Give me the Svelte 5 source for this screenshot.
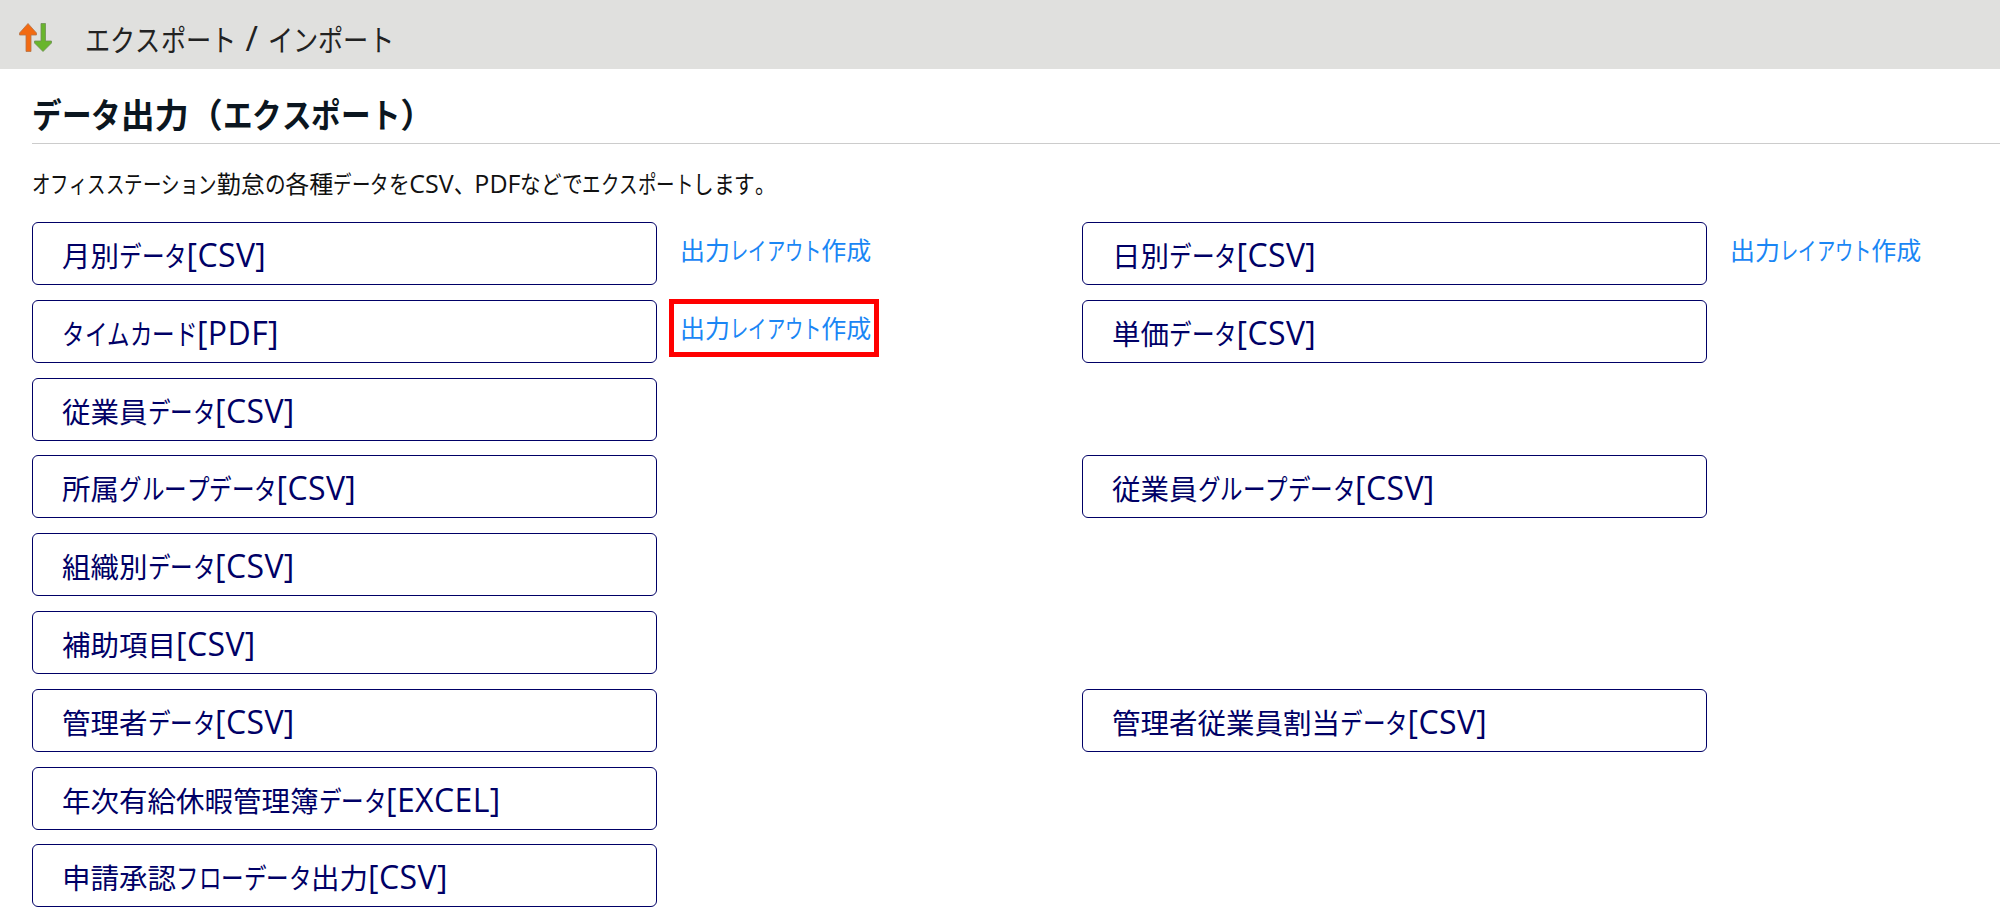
<script>
  const rows = [
    [{ label: "月別データ[CSV]", link: true }, { label: "日別データ[CSV]", link: true }],
    [{ label: "タイムカード[PDF]", link: true, marked: true }, { label: "単価データ[CSV]" }],
    [{ label: "従業員データ[CSV]" }, null],
    [{ label: "所属グループデータ[CSV]" }, { label: "従業員グループデータ[CSV]" }],
    [{ label: "組織別データ[CSV]" }, null],
    [{ label: "補助項目[CSV]" }, null],
    [{ label: "管理者データ[CSV]" }, { label: "管理者従業員割当データ[CSV]" }],
    [{ label: "年次有給休暇管理簿データ[EXCEL]" }, null],
    [{ label: "申請承認フローデータ出力[CSV]" }, null]
  ];

  // the original UI font has narrow kana and wide latin, so each kind gets its own treatment
  function runs(text) {
    return text.match(/[\u3000-\u30ff]|[\u4e00-\u9fff\uff00-\uffef]+|[^\u3000-\u30ff\u4e00-\u9fff\uff00-\uffef]+/g).map((part) => {
      let kind = "latin";
      if (/[\u30a0-\u30ff]/.test(part)) kind = "kana";
      else if (/[\u3000-\u309f]/.test(part)) kind = "kana hira";
      else if (/[\u4e00-\u9fff\uff00-\uffef]/.test(part)) kind = "kanji";
      return { part, kind };
    });
  }
</script>

{#snippet spaced(text)}
  {#each runs(text) as run}<span class={run.kind}>{run.part}</span>{/each}
{/snippet}

<div class="page">
  <header class="topbar">
    <svg class="topbar-icon" viewBox="0 0 33 29" width="33" height="29" aria-hidden="true">
      <path d="M9 0.5 L17.5 10 V12 H12 V28.5 H7 V12 H0.5 V10 Z" fill="#f26a12" stroke="#b5754a" stroke-width="0.8" />
      <path d="M22 0.5 H26.5 V18 H32.5 V20 L24 28.5 L15.5 20 V18 H22 Z" fill="#69b52c" stroke="#6f8f55" stroke-width="0.8" />
    </svg>
    <span class="topbar-title">{@render spaced("エクスポート / インポート")}</span>
  </header>

  <main class="content">
    <h1 class="heading">{@render spaced("データ出力（エクスポート）")}</h1>
    <p class="lead">{@render spaced("オフィスステーション勤怠の各種データをCSV、PDFなどでエクスポートします。")}</p>

    <div class="rows">
      {#each rows as row}
        <div class="row">
          {#each row as cell}
            <div class="cell">
              {#if cell}
                <button class="export-btn" type="button">{@render spaced(cell.label)}</button>
                {#if cell.link}
                  <a class="layout-link" class:marked={cell.marked} href="#layout">{@render spaced("出力レイアウト作成")}</a>
                {/if}
              {/if}
            </div>
          {/each}
        </div>
      {/each}
    </div>
  </main>
</div>

<style>
  :global(body) {
    margin: 0;
    background: #fff;
  }
  .page {
    font-family: "Noto Sans CJK JP", "Noto Sans", sans-serif;
    color: #111;
    height: 919px;
    overflow: hidden;
  }
  .kana {
    display: inline-block;
    width: calc(1em * var(--squeeze));
    transform: scaleX(var(--squeeze));
    transform-origin: left center;
    white-space: nowrap;
  }
  .kana.hira {
    width: calc(1em * var(--squeeze-hira, var(--squeeze)));
    transform: scaleX(var(--squeeze-hira, var(--squeeze)));
  }
  .latin {
    font-family: "Open Sans", "Noto Sans CJK JP", sans-serif;
    font-size: var(--latin-size, 1em);
    letter-spacing: var(--latin, 0);
  }
  .topbar {
    height: 69px;
    background: #e0e0de;
    display: flex;
    align-items: center;
    box-sizing: border-box;
    padding: 6px 0 0 19px;
    white-space: pre;
  }
  .topbar-title {
    margin-left: 33px;
    font-size: 30px;
    color: #222;
    --squeeze: 0.84;
    --latin-size: 34px;
    --latin: 0.5px;
  }
  .content {
    padding-left: 32px;
  }
  .heading {
    margin: 0;
    padding: 22px 0 6px;
    height: 46px;
    line-height: 46px;
    font-size: 34px;
    font-weight: 700;
    color: #0b1620;
    border-bottom: 1px solid #ccc;
    --squeeze: 0.87;
  }
  .lead {
    margin: 24px 0 0;
    height: 30px;
    line-height: 30px;
    font-size: 24px;
    color: #111;
    --squeeze: 0.77;
    --squeeze-hira: 0.86;
    --latin-size: 25px;
  }
  .rows {
    margin-top: 24px;
    display: flex;
    flex-direction: column;
    gap: 14.8px;
  }
  .row {
    display: grid;
    grid-template-columns: 1050px 1fr;
    height: 63px;
  }
  .cell {
    display: flex;
    align-items: flex-start;
  }
  .export-btn {
    width: 625px;
    height: 63px;
    box-sizing: border-box;
    padding: 2px 0 0 29px;
    text-align: left;
    background: #fff;
    border: 1px solid #000066;
    border-radius: 6px;
    font: inherit;
    font-size: 28.5px;
    color: #000066;
    --squeeze: 0.79;
    --latin-size: 32px;
    --latin: 0.4px;
  }
  .layout-link {
    display: block;
    margin: -1px 0 0 12px;
    padding: 8px 8px 0 11px;
    height: 50px;
    line-height: 40px;
    font-size: 25px;
    color: #1a86f5;
    text-decoration: none;
    --squeeze: 0.73;
  }
  .layout-link.marked {
    outline: 5px solid #ff0000;
    outline-offset: -5px;
  }
</style>
